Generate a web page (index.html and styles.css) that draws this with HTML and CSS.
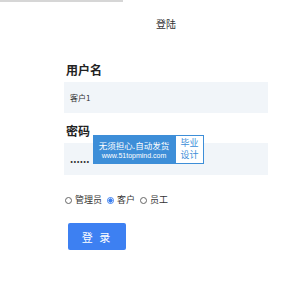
FILE: index.html
```
<!DOCTYPE html>
<html lang="zh">
<head>
    <meta charset="UTF-8">
    <title>登陆</title>
    <link rel="stylesheet" href="styles.css">
</head>
<body>
    <div class="topbar"></div>
    <div class="login">
        <div class="title">登陆</div>
        <div class="label label-user">用户名</div>
        <div class="field">客户1</div>
        <div class="label label-pass">密码</div>
        <div class="field field-pass">
            <span class="dots">......</span>
            <div class="stamp">
                <div class="stamp-blue">
                    <span class="stamp-line1">无须担心.自动发货</span>
                    <span class="stamp-line2">www.51topmind.com</span>
                </div>
                <div class="stamp-white">毕业<br>设计</div>
            </div>
        </div>
        <div class="roles">
            <span class="radio"></span><span class="role">管理员</span>
            <span class="radio checked"></span><span class="role">客户</span>
            <span class="radio"></span><span class="role">员工</span>
        </div>
        <button class="btn">登 录</button>
    </div>
</body>
</html>
```
FILE: styles.css
```
body {
    margin: 0;
    font-family: "Noto Sans CJK SC", "Liberation Sans", sans-serif;
    background: #ffffff;
    color: #222;
}

.topbar {
    width: 123px;
    height: 2px;
    background: #d6d6d6;
}

.login {
    margin-left: 64px;
    width: 204px;
}

.title {
    margin-top: 15px;
    text-align: center;
    font-size: 10px;
    line-height: 14px;
    color: #333;
}

.label {
    font-size: 12px;
    line-height: 16px;
    font-weight: bold;
    color: #222;
    padding-left: 2px;
}

.label-user {
    margin-top: 31px;
}

.label-pass {
    margin-top: 10px;
}

.field {
    margin-top: 4px;
    height: 31px;
    background: #f1f5f9;
    font-size: 8px;
    line-height: 31px;
    padding-left: 6px;
    color: #333;
    position: relative;
}

.field-pass {
    height: 32px;
    line-height: 32px;
}

.dots {
    font-size: 10px;
    font-weight: bold;
    letter-spacing: 0;
    color: #333;
}

.stamp {
    position: absolute;
    left: 29px;
    top: -8px;
    display: flex;
    height: 29px;
    line-height: normal;
}

.stamp-blue {
    width: 82px;
    background: #3d8ed8;
    color: #fff;
    display: flex;
    flex-direction: column;
    justify-content: center;
    align-items: center;
}

.stamp-line1 {
    font-size: 8.5px;
    line-height: 12px;
}

.stamp-line2 {
    font-family: "Liberation Sans", sans-serif;
    font-size: 7px;
    line-height: 10px;
}

.stamp-white {
    width: 29px;
    box-sizing: border-box;
    border: 1px solid #3d8ed8;
    background: #fff;
    color: #3d8ed8;
    font-size: 9px;
    line-height: 12px;
    text-align: center;
    padding-top: 1px;
}

.roles {
    margin-top: 18px;
    margin-left: 1px;
    display: flex;
    align-items: center;
    font-size: 9px;
    line-height: 14px;
    color: #333;
}

.radio {
    width: 5px;
    height: 5px;
    border: 1px solid #666;
    border-radius: 50%;
    margin-right: 3px;
}

.radio.checked {
    border-color: #3b7ff0;
    background: radial-gradient(circle, #3b7ff0 55%, #fff 60%);
}

.role {
    margin-right: 5px;
}

.btn {
    margin-top: 16px;
    margin-left: 4px;
    width: 58px;
    height: 27px;
    border: none;
    border-radius: 2px;
    background: #3d80f2;
    color: #fff;
    font-family: "Noto Sans CJK SC", sans-serif;
    font-size: 11px;
    letter-spacing: 2px;
    padding: 0;
    display: block;
}
```
